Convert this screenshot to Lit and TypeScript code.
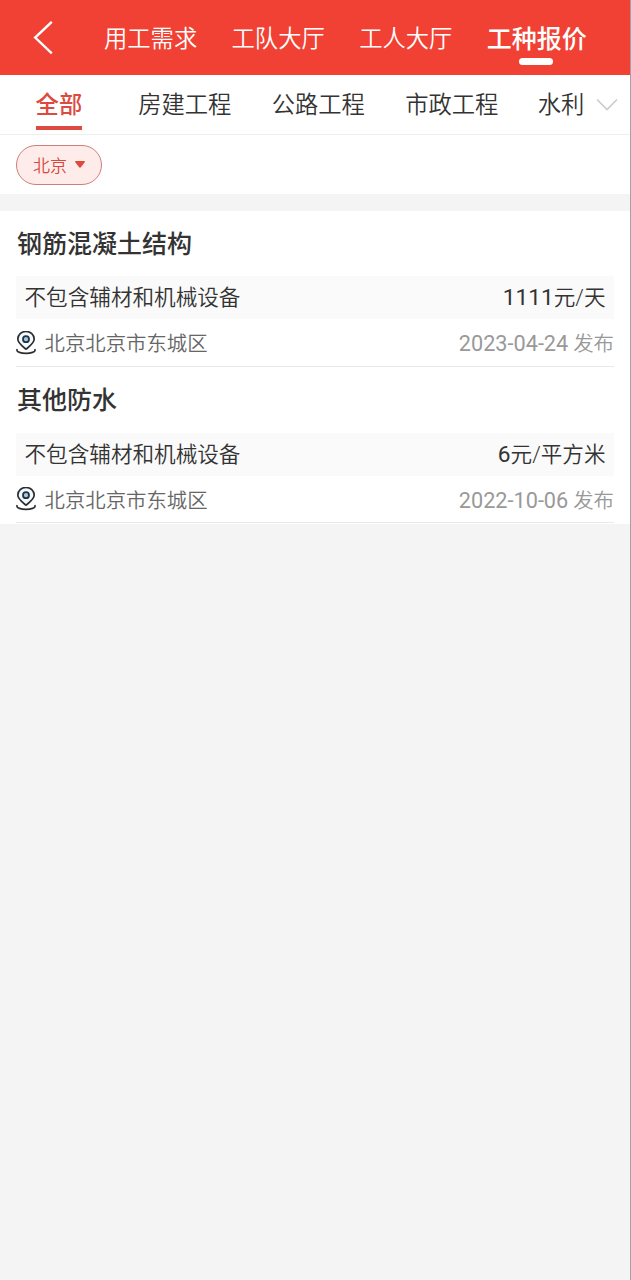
import { LitElement, html, css, svg } from "lit";
import { customElement, property, state } from "lit/decorators.js";
import { classMap } from "lit/directives/class-map.js";

interface Quote {
  title: string;
  scope: string;
  amount: string;
  unit: string;
  address: string;
  date: string;
}

@customElement("quote-card")
export class QuoteCard extends LitElement {
  @property({ attribute: false }) quote!: Quote;

  static styles = css`
    :host {
      display: block;
      height: 156.4px;
      box-sizing: border-box;
      border-bottom: 1.6px solid #e8e8e8;
      color: #333;
    }
    :host(:last-child) {
      height: 155.8px;
    }
    .title {
      margin: 0;
      padding-left: 1px;
      height: 65.2px;
      line-height: 67px;
      font-size: 25px;
      font-weight: 500;
    }
    .spec {
      display: flex;
      justify-content: space-between;
      height: 43px;
      line-height: 44px;
      padding: 0 8.5px;
      background: #fafafa;
      font-size: 21.6px;
    }
    .meta {
      display: flex;
      align-items: center;
      height: 47px;
      line-height: 30px;
      font-size: 20.4px;
      color: #666;
    }
    .pin {
      flex: none;
      width: 20px;
      height: 24px;
      margin-right: 8.5px;
    }
    .address,
    .date {
      padding-top: 3px;
    }
    .date {
      margin-left: auto;
      color: #999;
    }
    .day {
      font-size: 21.7px;
      font-weight: 400;
    }
    .amount {
      font-size: 22.7px;
      font-weight: 400;
    }
  `;

  render() {
    const q = this.quote;
    return html`
      <h2 class="title">${q.title}</h2>
      <div class="spec"><span>${q.scope}</span><span><span class="amount">${q.amount}</span>${q.unit}</span></div>
      <div class="meta">
        <svg class="pin" viewBox="0 0 20 24" fill="none" stroke-linecap="round">
          <path d="M10 18.200C6.600 15.400 1.800 12.300 1.800 8.100a8.200 7.600 0 0 1 16.400 0c0 4.200-4.800 7.300-8.200 10.100z" fill="#f4f9fc" stroke="#2b2d31" stroke-width="1.700" />
          <circle cx="10" cy="8.200" r="3" fill="#a9c9df" stroke="#1f3448" stroke-width="1.800" />
          <path d="M1 18.700c-.7 2.400 4.300 3.600 9 3.600s9.700-1.200 9-3.600" stroke="#2b2d31" stroke-width="1.700" />
        </svg>
        <span class="address">${q.address}</span>
        <span class="date"><span class="day">${q.date}</span> 发布</span>
      </div>
    `;
  }
}

@customElement("app-root")
export class AppRoot extends LitElement {
  @state() private section = "工种报价";
  @state() private category = "全部";

  private sections = ["用工需求", "工队大厅", "工人大厅", "工种报价"];
  private categories = ["全部", "房建工程", "公路工程", "市政工程", "水利"];
  private quotes: Quote[] = [
    { title: "钢筋混凝土结构", scope: "不包含辅材和机械设备", amount: "1111", unit: "元/天", address: "北京北京市东城区", date: "2023-04-24" },
    { title: "其他防水", scope: "不包含辅材和机械设备", amount: "6", unit: "元/平方米", address: "北京北京市东城区", date: "2022-10-06" },
  ];

  static styles = css`
    :host {
      display: block;
      box-sizing: border-box;
      height: 1280px;
      overflow: hidden;
      background: #f4f4f4;
      border-right: 1px solid #a2a2a2;
      font-family: Roboto, "Noto Sans CJK SC", sans-serif;
      font-weight: 350;
      color: #333;
    }
    .header {
      display: flex;
      height: 75px;
      background: #f14134;
      color: #fff;
    }
    .back {
      flex: none;
      width: 20px;
      height: 34px;
      margin: 21px 51px 0 33px;
    }
    .sections {
      display: flex;
      gap: 34.4px;
    }
    .section {
      display: flex;
      flex-direction: column;
      align-items: center;
      font-size: 23.3px;
      line-height: 79px;
      height: 75px;
      white-space: nowrap;
      cursor: pointer;
    }
    .section.active {
      font-size: 25px;
      font-weight: 500;
    }
    .section.active::after {
      content: "";
      flex: none;
      width: 34px;
      height: 7px;
      margin-top: -21px;
      margin-right: 1.5px;
      border-radius: 4px;
      background: #fff;
    }
    .categories {
      display: flex;
      height: 59px;
      background: #fff;
      border-bottom: 1px solid #efefef;
    }
    .scroller {
      display: flex;
      width: 585px;
    }
    .category {
      flex: none;
      margin-right: 40.3px;
      font-size: 23.3px;
      line-height: 60px;
      height: 59px;
      white-space: nowrap;
      cursor: pointer;
    }
    .category:first-child {
      margin: 0 56px 0 35.6px;
    }
    .category:last-child {
      margin: 0 0 0 -1px;
    }
    .category.active {
      color: #dc4a41;
      font-weight: 500;
      height: 50.5px;
      border-bottom: 4px solid #dc4a41;
    }
    .more {
      width: 22px;
      height: 14px;
      margin: 23px 0 0 11px;
    }
    .filters {
      display: flex;
      height: 59px;
      padding: 10px 16px 0;
      box-sizing: border-box;
      background: #fff;
    }
    .chip {
      display: flex;
      align-items: center;
      box-sizing: border-box;
      width: 86px;
      height: 40px;
      padding: 0 0 1px 16px;
      border: 1px solid #cf7f79;
      border-radius: 20px;
      background: #fdecea;
      color: #d8473d;
      font-size: 17px;
    }
    .caret {
      width: 10px;
      height: 7px;
      margin: 0 0 1px 8px;
    }
    .list {
      margin-top: 17px;
      padding: 0 16px 1px;
      background: #fff;
    }
  `;

  render() {
    return html`
      <header class="header">
        <svg class="back" viewBox="0 0 20 34" fill="none">
          <path d="M18.800 .8 2.200 16.600 18.800 32.400" stroke="#fff" stroke-width="2.400" />
        </svg>
        <nav class="sections">
          ${this.sections.map(
            (s) => html`<span class=${classMap({ section: true, active: s === this.section })} @click=${() => (this.section = s)}>${s}</span>`
          )}
        </nav>
      </header>
      <div class="categories">
        <div class="scroller">
          ${this.categories.map(
            (c) => html`<span class=${classMap({ category: true, active: c === this.category })} @click=${() => (this.category = c)}>${c}</span>`
          )}
        </div>
        <svg class="more" viewBox="0 0 22 14" fill="none">
          <path d="M1 1.500 11 11.500 21 1.500" stroke="#ccc" stroke-width="1.700" />
        </svg>
      </div>
      <div class="filters">
        <div class="chip">
          <span>北京</span>
          <svg class="caret" viewBox="0 0 10 7">${svg`<path d="M.8 0h8.400q1.200.4.3 1.500L5.900 6.300q-.9.900-1.800 0L.5 1.500Q-.4.400.8 0z" fill="#dc4a3d" />`}</svg>
        </div>
      </div>
      <main class="list">${this.quotes.map((q) => html`<quote-card .quote=${q}></quote-card>`)}</main>
    `;
  }
}
